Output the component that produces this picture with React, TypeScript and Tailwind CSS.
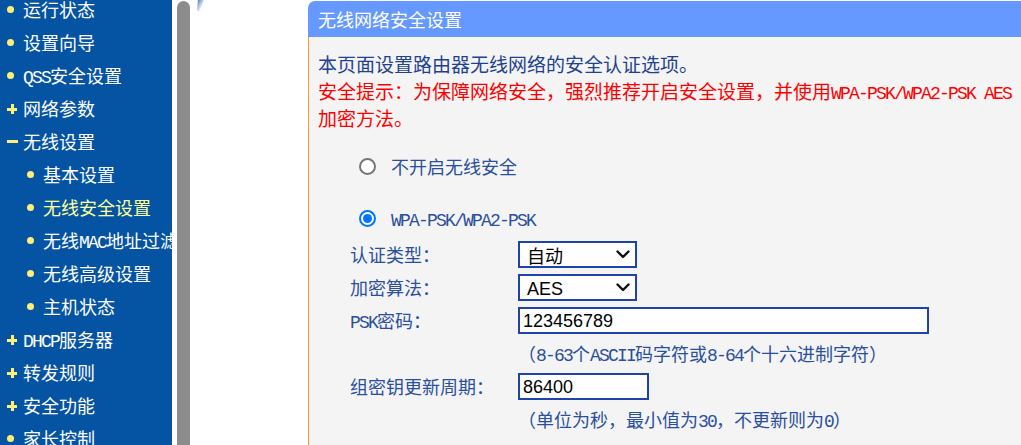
import React from "react";

const CJK = '"Noto Sans CJK SC", "Liberation Sans", sans-serif';

function M({ children }: { children: React.ReactNode }) {
  return (
    <span className="font-['Liberation_Mono',monospace] text-[18px] tracking-[-1.8px] leading-none">{children}</span>
  );
}

type Item = { kind: "dot" | "plus" | "minus"; sub?: boolean; label: React.ReactNode; active?: boolean };

const items: Item[] = [
  { kind: "dot", label: "运行状态" },
  { kind: "dot", label: "设置向导" },
  { kind: "dot", label: <><M>QSS</M>安全设置</> },
  { kind: "plus", label: "网络参数" },
  { kind: "minus", label: "无线设置" },
  { kind: "dot", sub: true, label: "基本设置" },
  { kind: "dot", sub: true, label: "无线安全设置", active: true },
  { kind: "dot", sub: true, label: <>无线<M>MAC</M>地址过滤</> },
  { kind: "dot", sub: true, label: "无线高级设置" },
  { kind: "dot", sub: true, label: "主机状态" },
  { kind: "plus", label: <><M>DHCP</M>服务器</> },
  { kind: "plus", label: "转发规则" },
  { kind: "plus", label: "安全功能" },
  { kind: "dot", label: "家长控制" },
];

function Marker({ kind }: { kind: Item["kind"] }) {
  if (kind === "dot")
    return <span className="block w-[7px] h-[7px] rounded-full bg-[#ffee77]" />;
  if (kind === "plus")
    return (
      <span className="relative block w-[10px] h-[10px]">
        <span className="absolute left-0 top-[4px] w-[10px] h-[3px] bg-[#ffee77]" />
        <span className="absolute left-[4px] top-0 w-[3px] h-[10px] bg-[#ffee77]" />
      </span>
    );
  return <span className="block w-[11px] h-[3px] bg-[#ffee77]" />;
}

function Sidebar() {
  return (
    <div className="w-[172px] shrink-0 bg-[#0553a3] overflow-hidden">
      <div className="mt-[-7px] flex flex-col">
        {items.map((it, i) => (
          <div key={i} className="h-[33px] flex items-center whitespace-nowrap">
            <div className={`${it.sub ? "w-[43px] pl-[27px]" : "w-[23px] pl-[7px]"} shrink-0 flex items-center`}>
              <Marker kind={it.kind} />
            </div>
            <span className={`text-[18px] leading-[33px] ${it.active ? "text-[#ffff99]" : "text-white"}`}>{it.label}</span>
          </div>
        ))}
      </div>
    </div>
  );
}

function Radio({ checked }: { checked?: boolean }) {
  return checked ? (
    <span className="w-[17px] h-[17px] rounded-full border-[2px] border-[#0075ff] bg-white flex items-center justify-center">
      <span className="w-[9px] h-[9px] rounded-full bg-[#0075ff]" />
    </span>
  ) : (
    <span className="w-[17px] h-[17px] rounded-full border-[2px] border-[#767676] bg-white" />
  );
}

function Chevron() {
  return (
    <svg width="14" height="9" viewBox="0 0 14 9" className="shrink-0">
      <path d="M1.5 1.5 L7 7 L12.5 1.5" fill="none" stroke="#111" strokeWidth="2.4" strokeLinecap="round" strokeLinejoin="round" />
    </svg>
  );
}

function Select({ value }: { value: React.ReactNode }) {
  return (
    <div className="w-[119px] h-[27px] border-[2px] border-[#1f43ad] bg-white flex items-center justify-between pl-[7px] pr-[5px]">
      <span className="text-[18px] leading-none text-black">{value}</span>
      <Chevron />
    </div>
  );
}

function Input({ value, w }: { value: string; w: string }) {
  return (
    <div className={`${w} h-[27px] border-[2px] border-[#1f43ad] bg-white flex items-center pl-[3px]`}>
      <span className="font-['Liberation_Sans',sans-serif] text-[18px] leading-none text-black">{value}</span>
    </div>
  );
}

function Row({ label, children }: { label: React.ReactNode; children: React.ReactNode }) {
  return (
    <div className="h-[33px] flex items-center">
      <div className="w-[168px] shrink-0 text-[18px] leading-[27px] text-[#2a4f9e]">{label}</div>
      {children}
    </div>
  );
}

export default function App() {
  return (
    <div className="w-[1021px] h-[445px] overflow-hidden flex bg-white" style={{ fontFamily: CJK }}>
      <Sidebar />
      <div className="w-[5px] shrink-0 bg-white" />
      <div className="w-[13px] shrink-0 pt-[1px]">
        <div className="h-full rounded-t-full bg-[#8c8c8c]" />
      </div>
      <div className="flex-1 relative pl-[118px] overflow-hidden">
        <svg className="absolute left-[6px] top-0" width="16" height="20" viewBox="0 0 16 20">
          <defs>
            <linearGradient id="g" x1="0" y1="0" x2="1" y2="1">
              <stop offset="0" stopColor="#2b5fb8" />
              <stop offset="1" stopColor="#ffffff" stopOpacity="0" />
            </linearGradient>
          </defs>
          <path d="M2 0 L8 0 L3 12 L1 10 Z" fill="url(#g)" />
        </svg>
        <div className="w-[760px] mt-[1px] rounded-tl-[7px] overflow-hidden">
          <div className="h-[36px] bg-[#6699ff] flex items-center pl-[10px]">
            <span className="text-[18px] text-white">无线网络安全设置</span>
          </div>
          <div className="bg-[#f4f4f4] border-l border-[#ff9933] h-[420px] pl-[9px]">
            <div className="pt-[13px] text-[19px] leading-[27px]">
              <div className="h-[27px] text-[#1f428f] whitespace-nowrap">本页面设置路由器无线网络的安全认证选项。</div>
              <div className="h-[27px] text-[#ff0000] whitespace-nowrap">
                安全提示：为保障网络安全，强烈推荐开启安全设置，并使用<M>WPA-PSK/WPA2-PSK AES</M>
              </div>
              <div className="h-[27px] text-[#ff0000]">加密方法。</div>
            </div>
            <div className="mt-[22px] h-[27px] flex items-center pl-[41px]">
              <Radio />
              <span className="ml-[15px] text-[18px] text-[#2a4f9e]">不开启无线安全</span>
            </div>
            <div className="mt-[25px] h-[27px] flex items-center pl-[41px]">
              <Radio checked />
              <span className="ml-[15px] text-[#2a4f9e]"><M>WPA-PSK/WPA2-PSK</M></span>
            </div>
            <div className="mt-[6px] pl-[32px]">
              <Row label="认证类型：">
                <Select value="自动" />
              </Row>
              <Row label="加密算法：">
                <Select value={<span className="font-['Liberation_Sans',sans-serif]">AES</span>} />
              </Row>
              <Row label={<><M>PSK</M>密码：</>}>
                <Input value="123456789" w="w-[411px]" />
              </Row>
              <Row label="">
                <span className="text-[18px] text-[#2a4f9e] whitespace-nowrap">
                  （<M>8-63</M>个<M>ASCII</M>码字符或<M>8-64</M>个十六进制字符）
                </span>
              </Row>
              <Row label="组密钥更新周期：">
                <Input value="86400" w="w-[131px]" />
              </Row>
              <Row label="">
                <span className="text-[18px] text-[#2a4f9e] whitespace-nowrap">
                  （单位为秒，最小值为<M>30</M>，不更新则为<M>0</M>）
                </span>
              </Row>
            </div>
          </div>
        </div>
      </div>
    </div>
  );
}
